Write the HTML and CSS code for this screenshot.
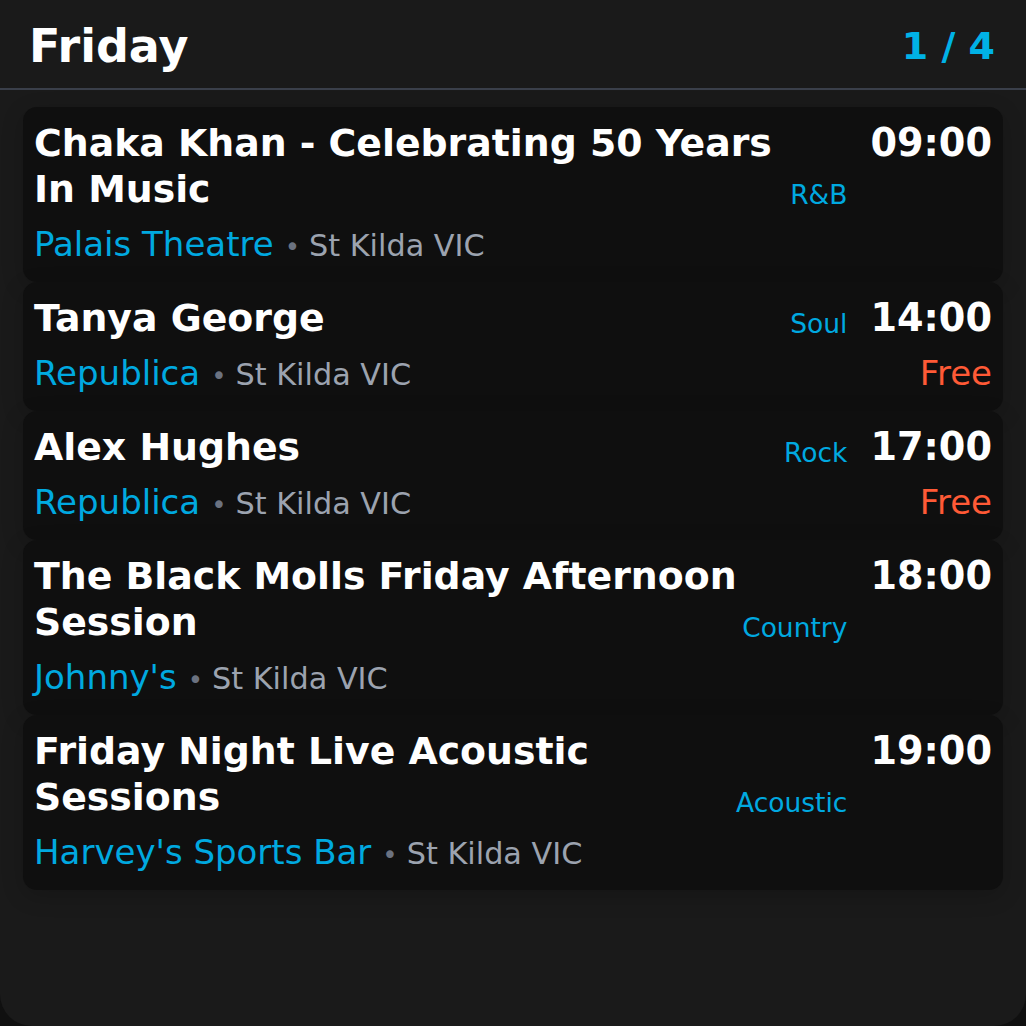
FILE: index.html
```html
<!DOCTYPE html>
<html lang="en">
<head>
<meta charset="utf-8">
<title>Friday</title>
<link rel="stylesheet" href="styles.css">
</head>
<body>
<div class="app">
  <header class="header">
    <h1 class="day">Friday</h1>
    <div class="pager">1 / 4</div>
  </header>
  <main class="list">
    <article class="card">
      <div class="title">Chaka Khan - Celebrating 50 Years In Music</div>
      <div class="genre">R&amp;B</div>
      <div class="time">09:00</div>
      <div class="venue"><span class="place">Palais Theatre</span><span class="dot">•</span><span class="loc">St Kilda VIC</span></div>
    </article>
    <article class="card">
      <div class="title">Tanya George</div>
      <div class="genre">Soul</div>
      <div class="time">14:00</div>
      <div class="venue"><span class="place">Republica</span><span class="dot">•</span><span class="loc">St Kilda VIC</span></div>
      <div class="price">Free</div>
    </article>
    <article class="card">
      <div class="title">Alex Hughes</div>
      <div class="genre">Rock</div>
      <div class="time">17:00</div>
      <div class="venue"><span class="place">Republica</span><span class="dot">•</span><span class="loc">St Kilda VIC</span></div>
      <div class="price">Free</div>
    </article>
    <article class="card">
      <div class="title">The Black Molls Friday Afternoon Session</div>
      <div class="genre">Country</div>
      <div class="time">18:00</div>
      <div class="venue"><span class="place">Johnny's</span><span class="dot">•</span><span class="loc">St Kilda VIC</span></div>
    </article>
    <article class="card">
      <div class="title">Friday Night Live Acoustic Sessions</div>
      <div class="genre">Acoustic</div>
      <div class="time">19:00</div>
      <div class="venue"><span class="place">Harvey's Sports Bar</span><span class="dot">•</span><span class="loc">St Kilda VIC</span></div>
    </article>
  </main>
</div>
</body>
</html>
```

FILE: styles.css
```css
* { box-sizing: border-box; }
html, body { margin: 0; padding: 0; }
body {
  background: #101010;
  font-family: "DejaVu Sans", sans-serif;
  color: #fff;
}
.app {
  width: 1026px;
  height: 1026px;
  background: #1a1a1a;
  border-radius: 0 0 32px 32px;
  overflow: hidden;
}
.header {
  height: 90px;
  padding: 4px 31px 0 29px;
  display: flex;
  align-items: center;
  justify-content: space-between;
  border-bottom: 2px solid #3a3f4a;
}
.day {
  margin: 0;
  font-size: 46px;
  font-weight: bold;
  color: #fff;
}
.pager {
  font-size: 38px;
  font-weight: bold;
  color: #00b2e6;
}
.list {
  padding: 17px 23px 0;
  display: flex;
  flex-direction: column;
}
.card {
  display: grid;
  grid-template-columns: 1fr auto auto;
  row-gap: 12px;
  padding: 13px 11px 18px 11px;
  background: #0f0f0f;
  border-radius: 14px;
  box-shadow: 0 6px 22px rgba(0, 0, 0, 0.18);
}
.title {
  grid-column: 1;
  grid-row: 1;
  align-self: start;
  font-size: 37.8px;
  line-height: 46px;
  font-weight: bold;
  color: #fff;
}
.genre {
  grid-column: 2;
  grid-row: 1;
  align-self: end;
  justify-self: end;
  font-size: 26.5px;
  line-height: 34px;
  color: #00a9e0;
}
.time {
  grid-column: 3;
  grid-row: 1;
  align-self: start;
  justify-self: end;
  margin-left: 23px;
  font-size: 38.2px;
  line-height: 46px;
  font-weight: bold;
  color: #fff;
}
.venue {
  grid-column: 1 / 3;
  grid-row: 2;
  align-self: baseline;
  font-size: 34px;
  line-height: 40px;
}
.place { color: #00a9e0; }
.dot {
  color: #6b7280;
  font-size: 26px;
  line-height: 1;
  margin: 0 9px 0 11px;
}
.loc { color: #9ca3af; font-size: 30.3px; line-height: 1; }
.price {
  grid-column: 3;
  grid-row: 2;
  align-self: baseline;
  justify-self: end;
  font-size: 34px;
  line-height: 40px;
  color: #ff5a36;
}
```
